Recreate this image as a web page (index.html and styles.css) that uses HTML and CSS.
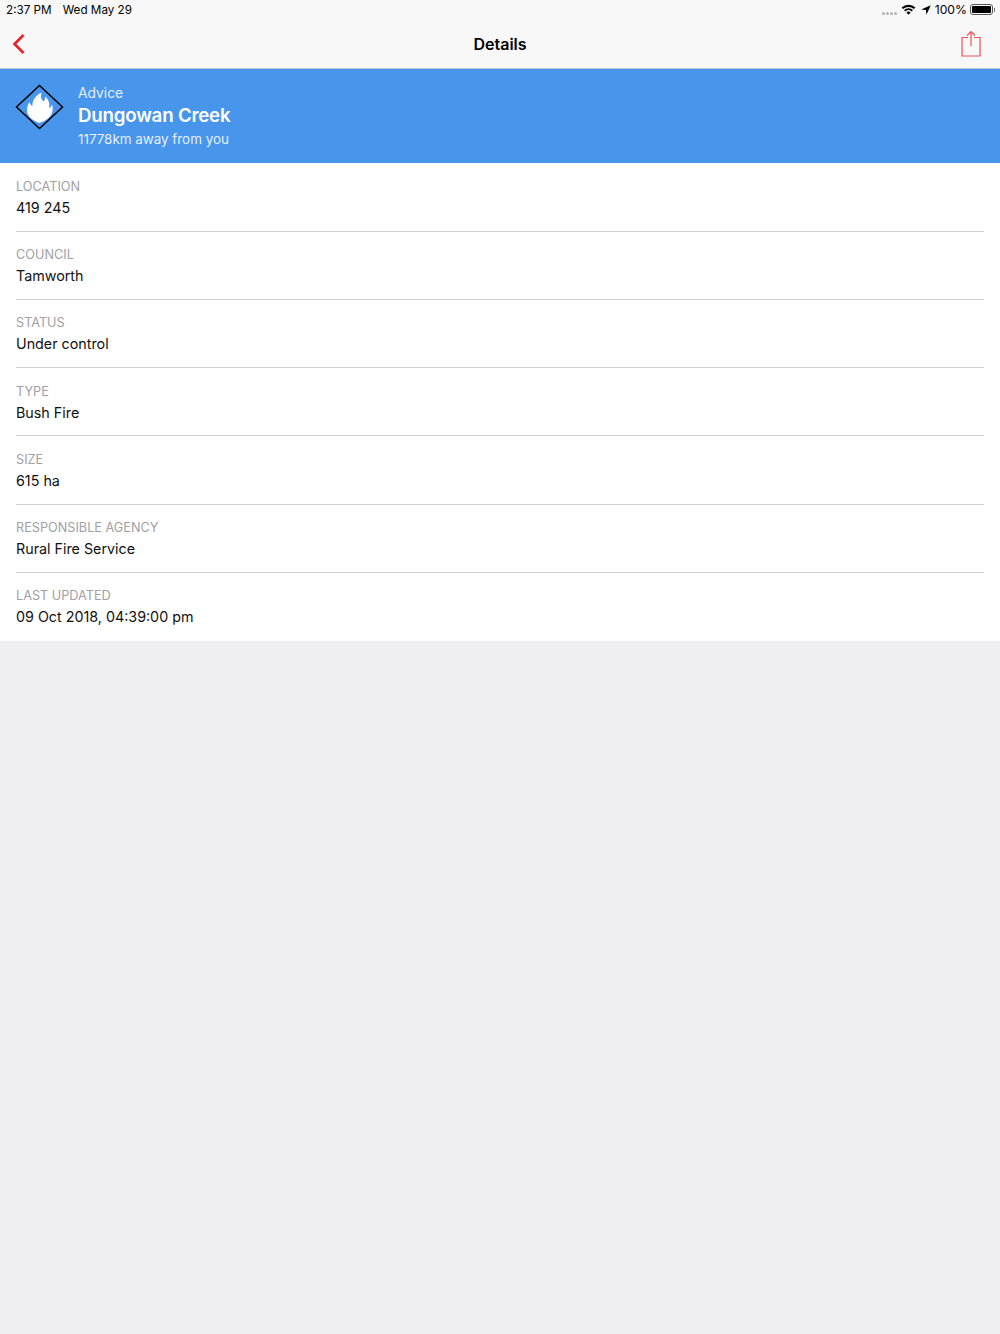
FILE: index.html
```html
<!DOCTYPE html>
<html>
    <head>
        <meta charset="UTF-8">
        <title>Details</title>
        <link rel="stylesheet" href="styles.css">
    </head>
    <body>
        <div class="top_bar">
            <div class="status_bar">
                <span class="status_time">2:37 PM</span>
                <span class="status_date">Wed May 29</span>
                <span class="status_right">
                    <span class="signal_dots"><i></i><i></i><i></i><i></i></span>
                    <svg class="wifi" width="15" height="11" viewBox="0 0 15 11">
                        <path d="M0.6 3.6 A10 10 0 0 1 14.4 3.6 L13 5.1 A8 8 0 0 0 2 5.1 Z" fill="#000"/>
                        <path d="M3 6.1 A6.5 6.5 0 0 1 12 6.1 L10.6 7.5 A4.6 4.6 0 0 0 4.4 7.5 Z" fill="#000"/>
                        <path d="M5.4 8.5 A3 3 0 0 1 9.6 8.5 L7.500 10.8 Z" fill="#000"/>
                    </svg>
                    <svg class="arrow" width="10" height="10" viewBox="0 0 10 10">
                        <path d="M9.8 0.2 L0.2 4.6 L5 5 L5.4 9.8 Z" fill="#000"/>
                    </svg>
                    <span class="battery_pct">100%</span>
                    <span class="battery"><span class="battery_fill"></span></span>
                    <span class="battery_tip"></span>
                </span>
            </div>
            <div class="nav_bar">
                <svg class="back" width="14" height="22" viewBox="0 0 14 22">
                    <path d="M11.5 2 L2.5 11 L11.5 20" fill="none" stroke="#e8232f" stroke-width="2.6"/>
                </svg>
                <h1 class="nav_title">Details</h1>
                <svg class="share" width="20" height="27" viewBox="0 0 20 27">
                    <path d="M7 7.500 H1 V26 H19 V7.500 H13" fill="none" stroke="#f4505c" stroke-width="1.200"/>
                    <path d="M10 1.500 V16 M6 5.500 L10 1.500 L14 5.500" fill="none" stroke="#f4505c" stroke-width="1.200"/>
                </svg>
            </div>
        </div>
        <div class="banner">
            <svg class="fire_icon" width="49" height="46" viewBox="0 0 49 46">
                <path d="M24.500 1.500 L47.500 23 L24.500 44.500 L1.500 23 Z" fill="none" stroke="#000" stroke-width="1.500"/>
                <path d="M24 39 C17 36 12 32 12 26 C12 23 13 20 14.500 18 C15 20 16 21.500 17.500 22 C17 16 21 11 27 8.500 C25 12 26 15 28.500 17.500 C30 16 30.500 14 30 12.500 C33.500 15 35 19 34 24 C35.500 23.500 36.500 22 37 20.500 C38.500 25 37.500 30 34 33.500 C31.500 36 28 38 24 39 Z" fill="#fff"/>
            </svg>
            <div class="banner_text">
                <div class="banner_level">Advice</div>
                <div class="banner_name">Dungowan Creek</div>
                <div class="banner_dist">11778km away from you</div>
            </div>
        </div>
        <div class="details">
            <div class="row">
                <div class="label">LOCATION</div>
                <div class="value">419 245</div>
            </div>
            <div class="row">
                <div class="label">COUNCIL</div>
                <div class="value">Tamworth</div>
            </div>
            <div class="row">
                <div class="label">STATUS</div>
                <div class="value">Under control</div>
            </div>
            <div class="row">
                <div class="label">TYPE</div>
                <div class="value">Bush Fire</div>
            </div>
            <div class="row">
                <div class="label">SIZE</div>
                <div class="value">615 ha</div>
            </div>
            <div class="row">
                <div class="label">RESPONSIBLE AGENCY</div>
                <div class="value">Rural Fire Service</div>
            </div>
            <div class="row">
                <div class="label">LAST UPDATED</div>
                <div class="value">09 Oct 2018, 04:39:00 pm</div>
            </div>
        </div>
    </body>
</html>
```
FILE: styles.css
```css
html, body {
    height: 100%;
}
body {
    margin: 0;
    min-height: 1334px;
    box-sizing: border-box;
    background: #efeff4;
    font-family: Inter, "Liberation Sans", sans-serif;
    color: #000;
}
.top_bar {
    height: 68px;
    background: #f8f8f8;
    border-bottom: 1px solid #b9c6d4;
}
.status_bar {
    height: 19px;
    padding: 0 5px 0 6px;
    display: flex;
    align-items: center;
    font-size: 11.7px;
}
.status_date {
    margin-left: 11px;
}
.status_right {
    margin-left: auto;
    display: flex;
    align-items: center;
}
.signal_dots {
    display: flex;
    gap: 1px;
    margin-top: 7px;
    margin-right: 4px;
}
.signal_dots i {
    width: 3px;
    height: 3px;
    border-radius: 50%;
    background: #b5b5b5;
}
.wifi {
    margin-right: 5px;
}
.arrow {
    margin-right: 4px;
}
.battery_pct {
    font-size: 12.2px;
    margin-right: 3px;
}
.battery {
    width: 23px;
    height: 11px;
    box-sizing: border-box;
    border: 1px solid #555;
    border-radius: 3px;
    padding: 1px;
    display: flex;
}
.battery_fill {
    flex: 1;
    background: #000;
    border-radius: 1px;
}
.battery_tip {
    width: 1px;
    height: 4px;
    background: #777;
    margin-left: 1px;
}
.nav_bar {
    height: 49px;
    padding: 0 19px 0 12px;
    display: flex;
    align-items: center;
    justify-content: space-between;
    position: relative;
}
.nav_title {
    position: absolute;
    left: 0;
    right: 0;
    margin: 0;
    text-align: center;
    font-size: 16px;
    font-weight: 600;
}
.banner {
    height: 94px;
    background: #4896ec;
    display: flex;
    color: #fff;
    padding-left: 15px;
}
.fire_icon {
    margin-top: 15px;
}
.banner_text {
    margin-left: 14px;
    padding-top: 16px;
}
.banner_level {
    font-size: 13.8px;
    line-height: 17px;
    color: #e6f0fc;
}
.banner_name {
    font-size: 18.7px;
    font-weight: 600;
    line-height: 28px;
    letter-spacing: -0.2px;
}
.banner_dist {
    font-size: 13.4px;
    line-height: 18px;
    color: #e6f0fc;
}
.details {
    height: 478px;
    box-sizing: border-box;
    background: #fff;
    padding: 0.6px 16px 0;
    display: grid;
    grid-template-rows: repeat(7, 1fr);
}
.row {
    border-bottom: 1px solid #d0d0d0;
    padding-top: 15.500px;
}
.row:last-child {
    border-bottom: 0;
}
.label {
    font-size: 12.7px;
    line-height: 16px;
    color: #a0a0a5;
}
.value {
    font-size: 14.3px;
    line-height: 25px;
    color: #111;
}
```
